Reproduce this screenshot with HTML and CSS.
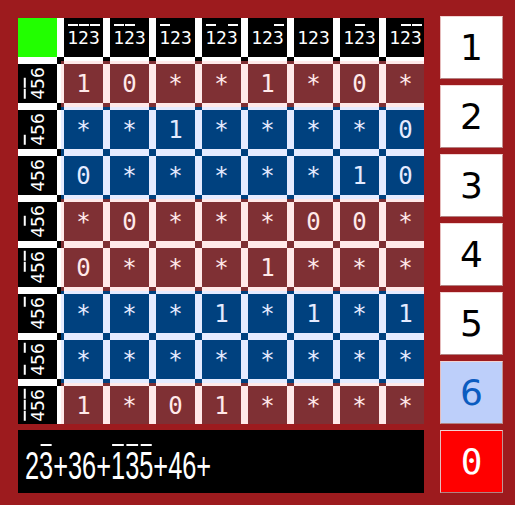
FILE: index.html
```html
<!DOCTYPE html>
<html lang="en">
<head>
  <meta charset="UTF-8" />
  <title>Karnaugh</title>
  <link rel="stylesheet" href="styles.css">
</head>
<body>
  <div class="app">
    <div class="left">
      <div class="grid">
        <div class="board">
          <div class="row hd">
            <div class="cell corner"><span></span></div>
            <div class="cell"><span><i class="o">1</i><i class="o">2</i><i class="o">3</i></span></div>
            <div class="cell"><span><i class="o">1</i><i class="o">2</i><i>3</i></span></div>
            <div class="cell"><span><i class="o">1</i><i>2</i><i>3</i></span></div>
            <div class="cell"><span><i class="o">1</i><i>2</i><i class="o">3</i></span></div>
            <div class="cell"><span><i>1</i><i>2</i><i class="o">3</i></span></div>
            <div class="cell"><span><i>1</i><i>2</i><i>3</i></span></div>
            <div class="cell"><span><i>1</i><i class="o">2</i><i>3</i></span></div>
            <div class="cell"><span><i>1</i><i class="o">2</i><i class="o">3</i></span></div>
          </div>

          <div class="row m">
            <div class="cell lab"><span><em><i class="o">4</i><i class="o">5</i><i>6</i></em></span></div>
            <div class="cell"><span>1</span></div>
            <div class="cell"><span>0</span></div>
            <div class="cell"><span>*</span></div>
            <div class="cell"><span>*</span></div>
            <div class="cell"><span>1</span></div>
            <div class="cell"><span>*</span></div>
            <div class="cell"><span>0</span></div>
            <div class="cell"><span>*</span></div>
          </div>

          <div class="row b">
            <div class="cell lab"><span><em><i class="o">4</i><i>5</i><i>6</i></em></span></div>
            <div class="cell"><span>*</span></div>
            <div class="cell"><span>*</span></div>
            <div class="cell"><span>1</span></div>
            <div class="cell"><span>*</span></div>
            <div class="cell"><span>*</span></div>
            <div class="cell"><span>*</span></div>
            <div class="cell"><span>*</span></div>
            <div class="cell"><span>0</span></div>
          </div>

          <div class="row b">
            <div class="cell lab"><span><em><i>4</i><i>5</i><i>6</i></em></span></div>
            <div class="cell"><span>0</span></div>
            <div class="cell"><span>*</span></div>
            <div class="cell"><span>*</span></div>
            <div class="cell"><span>*</span></div>
            <div class="cell"><span>*</span></div>
            <div class="cell"><span>*</span></div>
            <div class="cell"><span>1</span></div>
            <div class="cell"><span>0</span></div>
          </div>

          <div class="row m">
            <div class="cell lab"><span><em><i>4</i><i class="o">5</i><i>6</i></em></span></div>
            <div class="cell"><span>*</span></div>
            <div class="cell"><span>0</span></div>
            <div class="cell"><span>*</span></div>
            <div class="cell"><span>*</span></div>
            <div class="cell"><span>*</span></div>
            <div class="cell"><span>0</span></div>
            <div class="cell"><span>0</span></div>
            <div class="cell"><span>*</span></div>
          </div>

          <div class="row m">
            <div class="cell lab"><span><em><i>4</i><i class="o">5</i><i class="o">6</i></em></span></div>
            <div class="cell"><span>0</span></div>
            <div class="cell"><span>*</span></div>
            <div class="cell"><span>*</span></div>
            <div class="cell"><span>*</span></div>
            <div class="cell"><span>1</span></div>
            <div class="cell"><span>*</span></div>
            <div class="cell"><span>*</span></div>
            <div class="cell"><span>*</span></div>
          </div>

          <div class="row b">
            <div class="cell lab"><span><em><i>4</i><i>5</i><i class="o">6</i></em></span></div>
            <div class="cell"><span>*</span></div>
            <div class="cell"><span>*</span></div>
            <div class="cell"><span>*</span></div>
            <div class="cell"><span>1</span></div>
            <div class="cell"><span>*</span></div>
            <div class="cell"><span>1</span></div>
            <div class="cell"><span>*</span></div>
            <div class="cell"><span>1</span></div>
          </div>

          <div class="row b">
            <div class="cell lab"><span><em><i class="o">4</i><i>5</i><i class="o">6</i></em></span></div>
            <div class="cell"><span>*</span></div>
            <div class="cell"><span>*</span></div>
            <div class="cell"><span>*</span></div>
            <div class="cell"><span>*</span></div>
            <div class="cell"><span>*</span></div>
            <div class="cell"><span>*</span></div>
            <div class="cell"><span>*</span></div>
            <div class="cell"><span>*</span></div>
          </div>

          <div class="row m">
            <div class="cell lab"><span><em><i class="o">4</i><i class="o">5</i><i class="o">6</i></em></span></div>
            <div class="cell"><span>1</span></div>
            <div class="cell"><span>*</span></div>
            <div class="cell"><span>0</span></div>
            <div class="cell"><span>1</span></div>
            <div class="cell"><span>*</span></div>
            <div class="cell"><span>*</span></div>
            <div class="cell"><span>*</span></div>
            <div class="cell"><span>*</span></div>
          </div>
        </div>
      </div>

      <div class="formula"><span class="txt">2<i class="o">3</i>+36+<i class="o">1</i><i class="o">3</i><i class="o">5</i>+46+</span></div>
    </div>

    <div class="keys">
      <button class="key">1</button>
      <button class="key">2</button>
      <button class="key">3</button>
      <button class="key">4</button>
      <button class="key">5</button>
      <button class="key sel">6</button>
      <button class="key clear">0</button>
    </div>
  </div>
</body>
</html>
```

FILE: styles.css
```css
body {
  margin: 0;
  background-color: #9d1b1e;
  font-family: "DejaVu Sans", sans-serif;
}
.app {
  display: flex;
  gap: 16px;
  padding: 16px 0 0 18px;
}
.left {
  width: 406px;
  margin-top: 2px;
}
.grid {
  width: 406px;
  height: 406px;
  overflow: hidden;
}
.board {
  --dark: #000;
  --bg: #000;
  --lt: #fff;
  display: grid;
  grid-template-columns: repeat(9, 46px);
  grid-auto-rows: 46px;
  margin: -3px 0 0 -3px;
  font-family: "DejaVu Sans Mono", monospace;
}
.row {
  display: contents;
}
.m {
  --dark: #7f3034;
  --bg: #7f3034;
  --lt: #ffe9e9;
}
.b {
  --dark: #00417f;
  --bg: #00417f;
  --lt: #e5ebff;
}
.cell {
  display: flex;
  padding: 3px 4px 4px 3px;
  background-color: var(--dark);
  font-size: 24px;
}
.cell > span {
  flex: 1;
  display: flex;
  align-items: center;
  justify-content: center;
  background-color: var(--bg);
  color: var(--lt);
  box-shadow: 0 -3px 0 var(--lt), 0 4px 0 var(--lt), -3px 0 0 var(--lt), 4px 0 0 var(--lt);
}
.hd .cell,
.lab {
  --dark: #000;
  --bg: #000;
  --lt: #fff;
  font-size: 18px;
}
.hd .corner {
  --bg: #22ff00;
}
.lab em {
  display: inline-block;
  font-style: normal;
  transform: rotate(-90deg);
}
i {
  font-style: normal;
}
.o {
  position: relative;
}
.o::before {
  content: "";
  position: absolute;
  left: 1px;
  right: 0;
  top: -3px;
  height: 2px;
  background-color: currentColor;
}
.formula {
  box-sizing: border-box;
  height: 63px;
  margin-top: 6px;
  padding: 8px 0 0 7px;
  background-color: #000;
  color: #fff;
  font-family: "Liberation Sans", sans-serif;
  font-size: 39px;
  line-height: 55px;
  white-space: nowrap;
  overflow: hidden;
}
.formula .txt {
  display: inline-block;
  transform: scaleX(0.65);
  transform-origin: left center;
}
.formula .o::before {
  top: 0;
  left: 2px;
  right: 2px;
}
.keys {
  display: flex;
  flex-direction: column;
  gap: 6px;
}
.key {
  width: 63px;
  height: 63px;
  padding: 0;
  border: 1px solid;
  border-color: #f2d4d4 #c49494 #b38282 #e6bcbc;
  background-color: #fff;
  color: #000;
  font-family: "DejaVu Sans", sans-serif;
  font-size: 36px;
}
.key.sel {
  background-color: #bdcffa;
  color: #0b5cc0;
}
.key.clear {
  background-color: #f00;
  color: #fff;
  font-family: "DejaVu Sans Mono", monospace;
}
```
